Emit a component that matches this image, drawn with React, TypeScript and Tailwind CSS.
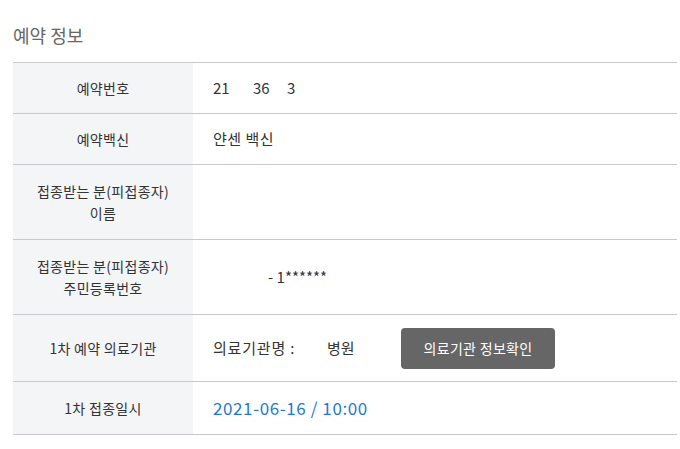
import React from "react";

const font = { fontFamily: '"Noto Sans CJK KR", "Noto Sans", sans-serif' };

function Row({ label, h, children }: { label: React.ReactNode; h: string; children?: React.ReactNode }) {
  return (
    <div className={`flex border-b border-[#c8c9d0] ${h}`}>
      <div className="w-[180px] shrink-0 bg-[#f4f5f7] flex items-center justify-center text-center text-[14px] leading-[22px] text-[#333] tracking-[0.3px]">
        {label}
      </div>
      <div className="flex-1 flex items-center pl-[20px] text-[15px] text-[#333]">{children}</div>
    </div>
  );
}

export default function App() {
  return (
    <div className="w-[680px] h-[449px] bg-white px-[13px] pt-[20px]" style={font}>
      <div className="text-[18px] leading-[30px] text-[#666] mb-[12px]">예약 정보</div>
      <div className="w-[664px] border-t border-[#c8c9d0]">
        <Row label="예약번호" h="h-[51px]">
          <span className="w-[40px]">21</span>
          <span className="w-[34px]">36</span>
          <span>3</span>
        </Row>
        <Row label="예약백신" h="h-[51px]">
          <span className="tracking-[0.5px]">얀센 백신</span>
        </Row>
        <Row
          label={
            <span>
              접종받는 분(피접종자)
              <br />
              이름
            </span>
          }
          h="h-[75px]"
        />
        <Row
          label={
            <span>
              접종받는 분(피접종자)
              <br />
              주민등록번호
            </span>
          }
          h="h-[75px]"
        >
          <span className="ml-[55px]">- 1******</span>
        </Row>
        <Row label="1차 예약 의료기관" h="h-[67px]">
          <span className="w-[114px] tracking-[0.8px]">의료기관명 :</span>
          <span className="w-[74px]">병원</span>
          <button className="w-[154px] h-[41px] rounded-[4px] bg-[#666] text-white text-[14px] tracking-[0.3px]">
            의료기관 정보확인
          </button>
        </Row>
        <Row label="1차 접종일시" h="h-[53px]">
          <span className="text-[17px] tracking-[0.6px] text-[#1f7acb]">2021-06-16 / 10:00</span>
        </Row>
      </div>
    </div>
  );
}
